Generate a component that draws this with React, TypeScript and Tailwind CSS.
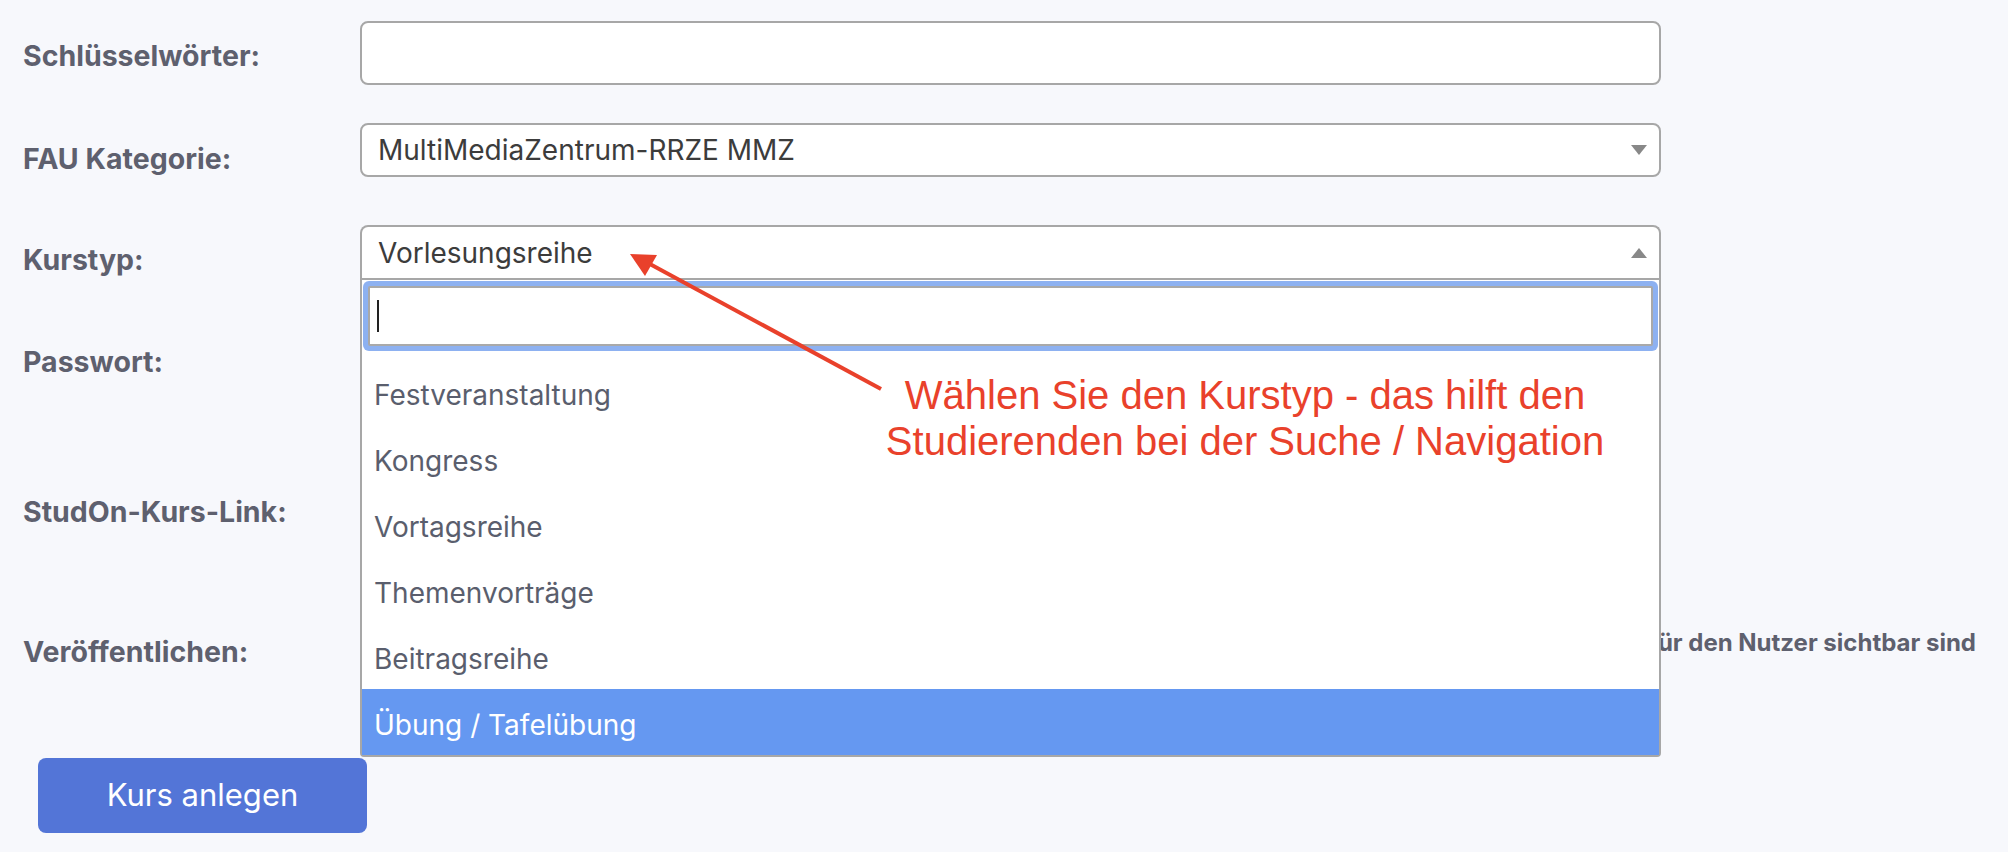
import React from 'react';

const labelCls = 'text-[28.5px] leading-[32px] font-bold text-[#5e606e]';

const options = [
  'Festveranstaltung',
  'Kongress',
  'Vortagsreihe',
  'Themenvorträge',
  'Beitragsreihe',
  'Übung / Tafelübung',
];

const Triangle: React.FC<{ up?: boolean }> = ({ up }) => (
  <svg
    width="16"
    height="10"
    viewBox="0 0 16 10"
    className="absolute right-[12px] top-1/2 -translate-y-1/2"
  >
    {up ? <polygon points="0,10 16,10 8,0" fill="#888" /> : <polygon points="0,0 16,0 8,10" fill="#888" />}
  </svg>
);

const Dropdown: React.FC = () => (
  <div className="absolute left-0 top-full z-10 w-full rounded-b-[4px] border-2 border-[#a7a7a7] bg-white">
    <div className="px-[6px] pb-[13px] pt-[6px]">
      <div className="flex h-[60px] items-center rounded-[2px] border-2 border-[#a9a9a9] bg-white pl-[7px] ring-[5px] ring-[#8db1f1]">
        <div className="h-[32px] w-[2px] bg-[#222]" />
      </div>
    </div>
    {options.map((o, i) => {
      const active = i === options.length - 1;
      return (
        <div
          key={o}
          className={
            active
              ? 'flex h-[66px] items-center bg-[#6598f1] pl-[12px] pt-[6px] text-[28px] text-white'
              : 'flex h-[66px] items-center pl-[12px] pt-[6px] text-[28px] text-[#5a5e6d]'
          }
        >
          {o}
        </div>
      );
    })}
  </div>
);

export default function App() {
  return (
    <div className="relative min-h-[852px] w-full overflow-hidden bg-[#f7f8fc] pl-[23px] pt-[21px] font-['Inter',sans-serif]">
      <div className="flex h-[102px]">
        <div className={`w-[337px] pt-[19px] ${labelCls}`}>Schlüsselwörter:</div>
        <div className="h-[64px] w-[1301px] rounded-[8px] border-2 border-[#a7a7a7] bg-white" />
      </div>

      <div className="flex h-[102px]">
        <div className={`w-[337px] pt-[20px] ${labelCls}`}>FAU Kategorie:</div>
        <div className="relative flex h-[54px] w-[1301px] items-center rounded-[8px] border-2 border-[#a7a7a7] bg-white px-[16px] text-[28px] text-[#3c3c3c]">
          MultiMediaZentrum-RRZE MMZ
          <Triangle />
        </div>
      </div>

      <div className="flex h-[104px]">
        <div className={`w-[337px] pt-[19px] ${labelCls}`}>Kurstyp:</div>
        <div className="relative h-[53px] w-[1301px]">
          <div className="relative flex h-[53px] items-center rounded-t-[8px] border-2 border-b-0 border-[#a7a7a7] bg-white px-[16px] text-[28px] text-[#3c3c3c]">
            Vorlesungsreihe
            <Triangle up />
          </div>
          <Dropdown />
        </div>
      </div>

      <div className="flex h-[150px]">
        <div className={`w-[337px] pt-[17px] ${labelCls}`}>Passwort:</div>
        <div className="w-[1301px] pt-[6px]">
          <div className="h-[54px] rounded-[8px] border-2 border-[#a7a7a7] bg-white" />
        </div>
      </div>

      <div className="flex h-[140px]">
        <div className={`w-[337px] pt-[17px] ${labelCls}`}>StudOn-Kurs-Link:</div>
        <div className="w-[1301px] pt-[6px]">
          <div className="h-[54px] rounded-[8px] border-2 border-[#a7a7a7] bg-white" />
        </div>
      </div>

      <div className="flex h-[139px]">
        <div className={`w-[337px] pt-[17px] ${labelCls}`}>Veröffentlichen:</div>
        <div className="w-[1616px] whitespace-nowrap pt-[9px] text-right text-[24px] font-bold leading-[30px] text-[#5e606e]">
          Nur veröffentlichte Kurse sind für den Nutzer sichtbar sind
        </div>
      </div>

      <button className="ml-[15px] flex h-[75px] w-[329px] items-center justify-center rounded-[8px] bg-[#5375d7] text-[31px] text-white">
        Kurs anlegen
      </button>

      <svg className="pointer-events-none absolute left-0 top-0 z-20" width="2008" height="852">
        <line x1="881" y1="389" x2="648" y2="263" stroke="#e9412b" strokeWidth="4" />
        <polygon points="630,254 657,255 645,276" fill="#e9412b" />
      </svg>

      <div className="absolute left-[845px] top-[372px] z-20 w-[800px] whitespace-nowrap text-center font-['Liberation_Sans',Arial,sans-serif] text-[40px] leading-[46px] text-[#e9412b]">
        Wählen Sie den Kurstyp - das hilft den
        <br />
        Studierenden bei der Suche / Navigation
      </div>
    </div>
  );
}
